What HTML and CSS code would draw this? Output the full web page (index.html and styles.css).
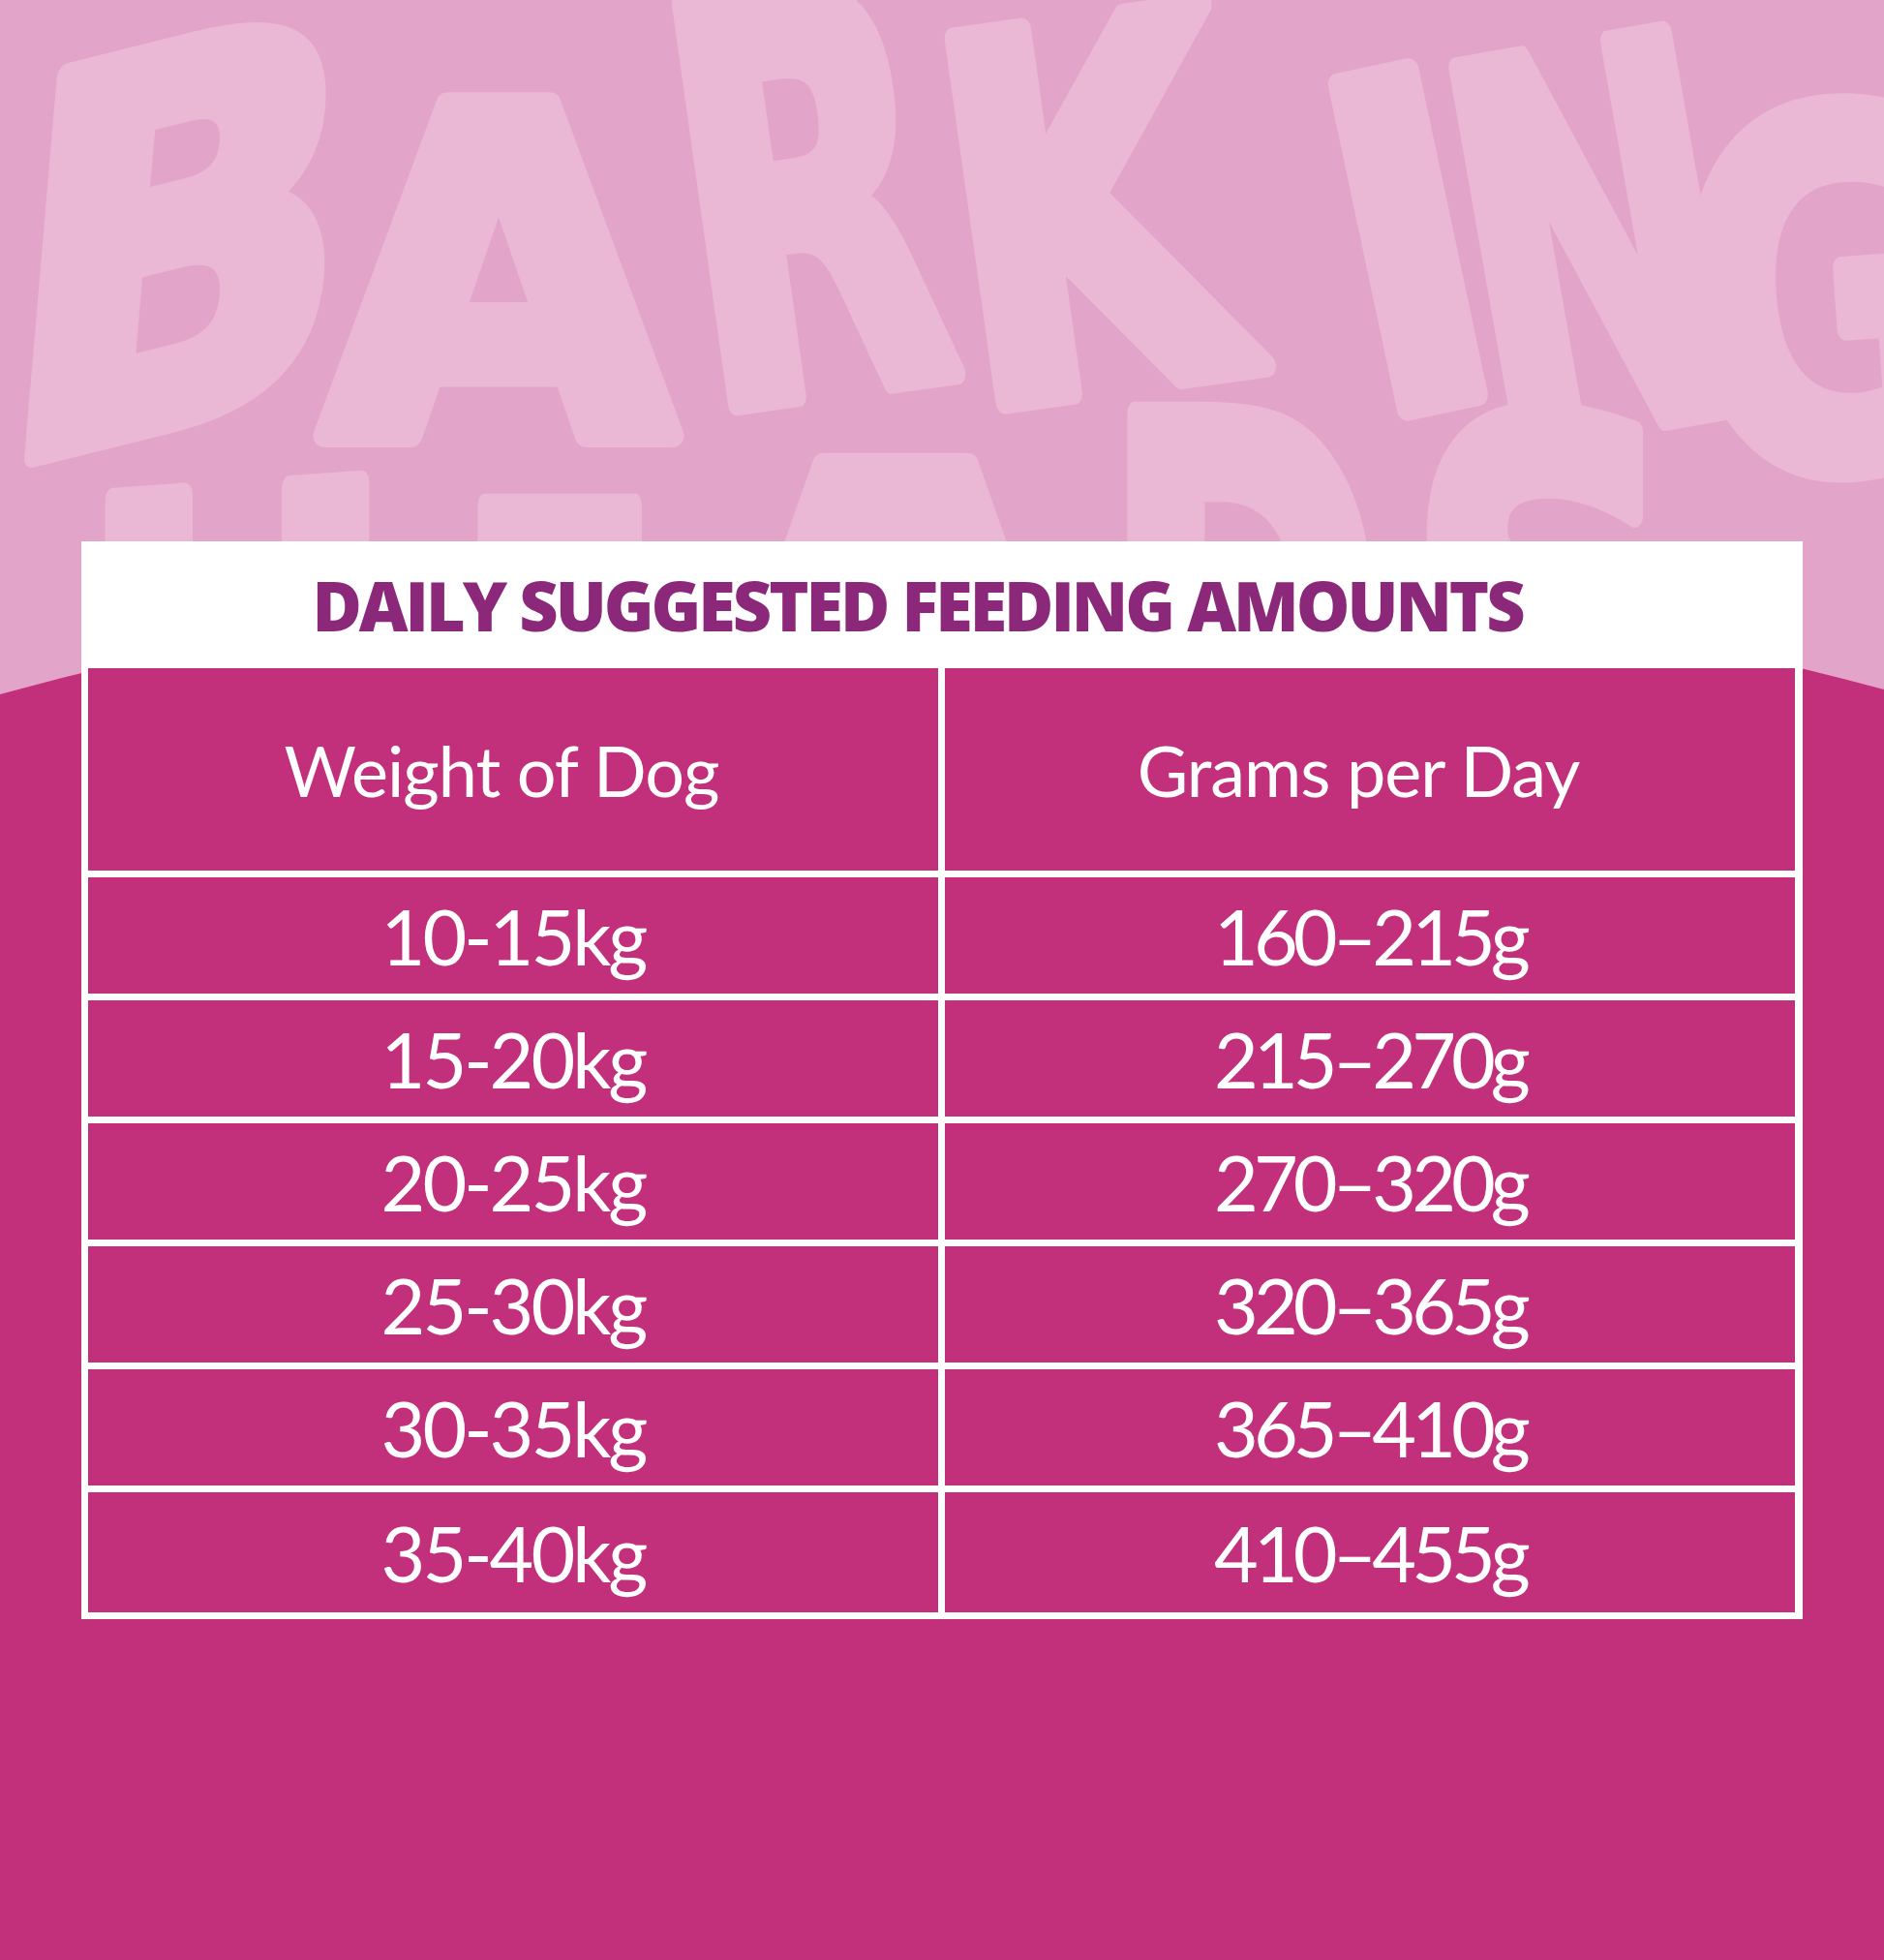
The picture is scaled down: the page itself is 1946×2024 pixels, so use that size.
FILE: index.html
```html
<!DOCTYPE html>
<html lang="en">
<head>
<meta charset="utf-8">
<title>Daily Suggested Feeding Amounts</title>
<link rel="stylesheet" href="styles.css">
</head>
<body>
<div class="page">
  <svg class="backdrop" viewBox="0 0 1946 760" width="1946" height="760" aria-hidden="true">
    <defs>
      <clipPath id="above-card">
        <rect x="0" y="0" width="1946" height="560"/>
      </clipPath>
    </defs>
    <rect class="sky" x="0" y="0" width="1946" height="760"/>
    <g class="bgword" clip-path="url(#above-card)">
      <text font-size="528" transform="translate(170 437) skewY(-14) skewX(-5) scale(0.88 1)">B</text>
      <text font-size="470" transform="translate(515 450) scale(1 1)">A</text>
      <text font-size="570" transform="translate(862 403) rotate(-8) scale(0.62 1)">R</text>
      <text font-size="520" transform="translate(1150 400) rotate(-8) scale(0.74 1)">K</text>
      <text font-size="470" transform="translate(1490 415) rotate(-12) scale(0.85 1)">I</text>
      <text font-size="540" transform="translate(1680 440) rotate(-10) scale(0.62 1)">N</text>
      <text font-size="500" transform="translate(1900 480) rotate(-4) scale(0.74 1)">G</text>
      <text font-size="560" transform="translate(245 915) skewY(-4) scale(0.7 1)">H</text>
      <text font-size="560" transform="translate(577 930) scale(0.55 1)">E</text>
      <text font-size="700" transform="translate(925 990) scale(0.95 1)">A</text>
      <text font-size="560" transform="translate(1284 835) scale(0.62 1)">D</text>
      <text font-size="560" transform="translate(1595 842) scale(0.7 1)">S</text>
    </g>
    <path class="ground" d="M0,717 Q973,452 1946,712 L1946,760 L0,760 Z"/>
  </svg>

  <section class="card">
    <h1 class="title">DAILY SUGGESTED FEEDING AMOUNTS</h1>
    <div class="grid">
      <div class="cell head">Weight of Dog</div>
      <div class="cell head">Grams per Day</div>
      <div class="cell">10-15kg</div>
      <div class="cell amount">160–215g</div>
      <div class="cell">15-20kg</div>
      <div class="cell amount">215–270g</div>
      <div class="cell">20-25kg</div>
      <div class="cell amount">270–320g</div>
      <div class="cell">25-30kg</div>
      <div class="cell amount">320–365g</div>
      <div class="cell">30-35kg</div>
      <div class="cell amount">365–410g</div>
      <div class="cell">35-40kg</div>
      <div class="cell amount">410–455g</div>
    </div>
  </section>
</div>
</body>
</html>
```

FILE: styles.css
```css
html, body {
  margin: 0;
  padding: 0;
}

body {
  background: #c2307b;
}

.page {
  position: relative;
  width: 1946px;
  height: 2024px;
  box-sizing: border-box;
  padding: 559px 84px 0 84px;
  background: #c2307b;
  overflow: hidden;
}

.backdrop {
  position: absolute;
  left: 0;
  top: 0;
  width: 1946px;
  height: 760px;
  z-index: 0;
  display: block;
}

.sky {
  fill: #e2a4c8;
}

.bgword text {
  font-family: "DejaVu Sans", sans-serif;
  font-weight: bold;
  text-anchor: middle;
  fill: #eab7d5;
  stroke: #eab7d5;
  stroke-width: 24;
  stroke-linejoin: round;
}

.ground {
  fill: #c2307b;
}

.card {
  position: relative;
  z-index: 1;
  background: #ffffff;
  padding: 0 8px 7px 7px;
}

.title {
  margin: 0;
  height: 131px;
  display: flex;
  align-items: center;
  justify-content: center;
  padding-right: 50px;
  font-family: "Open Sans", sans-serif;
  font-weight: 800;
  font-stretch: 100%;
  font-size: 70px;
  color: #8b2879;
  letter-spacing: -3px;
  white-space: nowrap;
}

.grid {
  display: grid;
  grid-template-columns: 1fr 1fr;
  grid-template-rows: 209px repeat(5, 120px) 124px;
  gap: 7px;
}

.cell {
  background: #c2307b;
  color: #ffffff;
  display: flex;
  align-items: center;
  justify-content: center;
  font-family: "Lato", sans-serif;
  font-weight: 400;
  font-size: 79px;
  letter-spacing: -3px;
  white-space: nowrap;
}

.cell.amount {
  letter-spacing: -5px;
}

.cell.head {
  font-size: 72px;
  letter-spacing: -1px;
  padding-right: 24px;
}
```
